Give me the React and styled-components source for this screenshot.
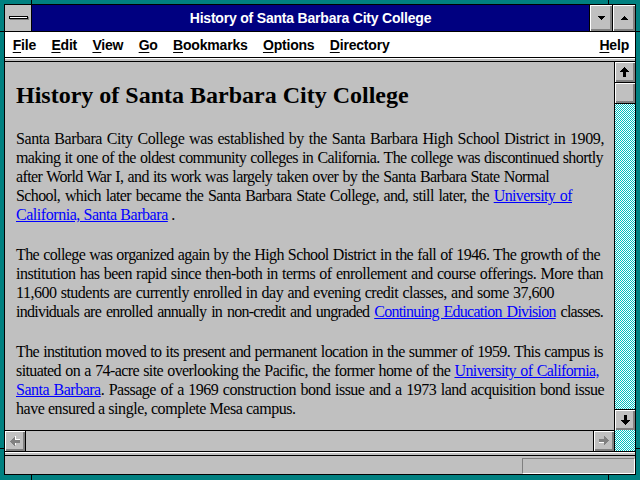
import React from 'react';
import styled, { createGlobalStyle } from 'styled-components';

const GlobalStyle = createGlobalStyle`
  html, body {
    margin: 0;
    padding: 0;
    background: #008080;
  }
  body {
    width: 640px;
    height: 480px;
    overflow: hidden;
  }
`;

const Frame = styled.div`
  position: relative;
  box-sizing: border-box;
  width: 640px;
  height: 480px;
  padding: 4px 4px 5px 4px;
  background: #008080;
`;

// little black notches in the sizing border
const Tick = styled.span`
  position: absolute;
  background: #000;
  ${({ $edge, $at }) => {
    if ($edge === 'top') return `top: 0; left: ${$at}px; width: 1px; height: 4px;`;
    if ($edge === 'bottom') return `bottom: 0; left: ${$at}px; width: 1px; height: 5px;`;
    if ($edge === 'left') return `left: 0; top: ${$at}px; width: 4px; height: 1px;`;
    return `right: 0; top: ${$at}px; width: 4px; height: 1px;`;
  }}
`;

const Window = styled.div`
  box-sizing: border-box;
  height: 100%;
  border: 1px solid #000;
  background: #c0c0c0;
  display: flex;
  flex-direction: column;
`;

const TitleBar = styled.div`
  display: flex;
  height: 26px;
  flex: none;
  background: #000080;
  border-bottom: 1px solid #000;
`;

const ControlBox = styled.div`
  width: 26px;
  border-right: 1px solid #000;
  background: #c0c0c0;
  display: flex;
  align-items: center;
  justify-content: center;
`;

const ControlBar = styled.div`
  width: 17px;
  height: 1px;
  background: #fff;
  border: 1px solid #000;
  box-shadow: 1px 1px 0 #808080;
  margin-top: -1px;
`;

const Title = styled.div`
  flex: 1;
  display: flex;
  align-items: center;
  justify-content: center;
  color: #fff;
  font-family: "Liberation Sans", Arial, sans-serif;
  font-weight: bold;
  font-size: 14px;
  letter-spacing: -0.2px;
  padding-bottom: 1px;
`;

const CaptionButton = styled.div`
  width: 22px;
  border-left: 1px solid #000;
  background: #c0c0c0;
  box-shadow: inset 1px 1px #fff, inset -1px -1px #808080, inset -2px -2px #808080;
  display: flex;
  align-items: center;
  justify-content: center;
`;

const MenuBar = styled.div`
  display: flex;
  align-items: center;
  height: 25px;
  flex: none;
  background: #fff;
  border-bottom: 1px solid #000;
  font-family: "Liberation Sans", Arial, sans-serif;
  font-weight: bold;
  font-size: 14px;
  letter-spacing: -0.2px;
  color: #000;
`;

const MenuItem = styled.span`
  padding: 0 7.7px;
  margin-left: ${({ $right }) => ($right ? 'auto' : '0')};
  padding-right: ${({ $right }) => ($right ? '6px' : '7.7px')};
  u {
    text-decoration: underline;
    text-underline-offset: 2px;
  }
`;

const Divider = styled.div`
  height: 2px;
  flex: none;
  border-top: 1px solid #fff;
  border-bottom: 1px solid #000;
  background: #c0c0c0;
`;

const Main = styled.div`
  flex: 1;
  min-height: 0;
  display: grid;
  grid-template-columns: 1fr 21px;
  grid-template-rows: 1fr 21px;
  border-bottom: 1px solid #000;
`;

const Content = styled.div`
  overflow: hidden;
  padding: 19px 0 0 11px;
  color: #000;
  font-family: "Liberation Serif", "Times New Roman", serif;
`;

const Heading = styled.h1`
  margin: 0 0 20px;
  font-size: 24px;
  line-height: 28px;
  font-weight: bold;
  white-space: nowrap;
`;

const Para = styled.p`
  margin: 0 0 21px;
  font-size: 16px;
  line-height: 19px;
`;

// one rendered line of the page; full lines are spread to the width they have on screen
const Line = styled.span`
  display: block;
  letter-spacing: ${({ $ls }) => ($ls ?? -0.6)}px;
  ${({ $w }) =>
    $w
      ? `width: ${$w}px; text-align: justify; text-align-last: justify;`
      : 'white-space: nowrap;'}
`;

const Link = styled.a`
  color: #0000ff;
  text-decoration: underline;
`;

const dither = `
  background-color: #fff;
  background-image: repeating-conic-gradient(#00c0c0 0% 25%, #fff 0% 50%);
  background-size: 2px 2px;
`;

const VScroll = styled.div`
  display: flex;
  flex-direction: column;
  border-left: 1px solid #000;
  ${dither}
`;

const ScrollButton = styled.div`
  box-sizing: content-box;
  width: 20px;
  height: 20px;
  flex: none;
  background: #c0c0c0;
  box-shadow: inset 1px 1px #fff, inset -1px -1px #808080, inset -2px -2px #808080;
  display: flex;
  align-items: center;
  justify-content: center;
  border-top: ${({ $top }) => ($top ? '1px solid #000' : 'none')};
  border-bottom: ${({ $bottom }) => ($bottom ? '1px solid #000' : 'none')};
  border-left: ${({ $left }) => ($left ? '1px solid #000' : 'none')};
  border-right: ${({ $right }) => ($right ? '1px solid #000' : 'none')};
`;

const Track = styled.div`
  flex: 1;
`;

const HScroll = styled.div`
  display: flex;
  border-top: 1px solid #000;
  background: #c0c0c0;
`;

const Corner = styled.div`
  border-left: 1px solid #000;
  ${dither}
`;

const StatusBar = styled.div`
  height: 18px;
  flex: none;
  display: flex;
  justify-content: flex-end;
  padding: 2px 0 0 0;
  box-sizing: border-box;
`;

const StatusField = styled.div`
  box-sizing: border-box;
  width: 113px;
  height: 16px;
  border-top: 1px solid #808080;
  border-left: 1px solid #808080;
  border-bottom: 1px solid #fff;
  border-right: 1px solid #fff;
`;

const rot = { up: 0, right: 90, down: 180, left: 270 };

const Arrow = ({ dir, disabled }) => (
  <svg width="10" height="10" viewBox="0 0 10 10" shapeRendering="crispEdges">
    <g transform={`rotate(${rot[dir]} 5 5)`}>
      {disabled && (
        <polygon points="5.5,1 10,5.5 7,5.5 7,10 4,10 4,5.5 1,5.5" fill="#fff" />
      )}
      <polygon
        points="4.5,0 9,5 6,5 6,10 3,10 3,5 0,5"
        fill={disabled ? '#808080' : '#000'}
      />
    </g>
  </svg>
);

const Triangle = ({ down }) => (
  <svg width="7" height="4" viewBox="0 0 7 4" shapeRendering="crispEdges">
    <polygon points={down ? '0,0 7,0 3.5,4' : '3.5,0 7,4 0,4'} fill="#000" />
  </svg>
);

const menus = ['File', 'Edit', 'View', 'Go', 'Bookmarks', 'Options', 'Directory'];

export default function App() {
  return (
    <>
      <GlobalStyle />
      <Frame>
        <Tick $edge="top" $at={31} />
        <Tick $edge="top" $at={608} />
        <Tick $edge="bottom" $at={31} />
        <Tick $edge="bottom" $at={608} />
        <Tick $edge="left" $at={31} />
        <Tick $edge="left" $at={448} />
        <Tick $edge="right" $at={31} />
        <Tick $edge="right" $at={448} />
        <Window>
          <TitleBar>
            <ControlBox>
              <ControlBar />
            </ControlBox>
            <Title>History of Santa Barbara City College</Title>
            <CaptionButton>
              <Triangle down />
            </CaptionButton>
            <CaptionButton>
              <Triangle />
            </CaptionButton>
          </TitleBar>
          <MenuBar>
            {menus.map((m) => (
              <MenuItem key={m}>
                <u>{m[0]}</u>
                {m.slice(1)}
              </MenuItem>
            ))}
            <MenuItem $right>
              <u>H</u>elp
            </MenuItem>
          </MenuBar>
          <Divider />
          <Main>
            <Content>
              <Heading>History of Santa Barbara City College</Heading>
              <Para>
                <Line $w={588} $ls={-0.4}>
                  Santa Barbara City College was established by the Santa Barbara High School District in 1909,
                </Line>
                <Line $w={587}>
                  making it one of the oldest community colleges in California. The college was discontinued shortly
                </Line>
                <Line $w={533}>
                  after World War I, and its work was largely taken over by the Santa Barbara State Normal
                </Line>
                <Line $w={556}>
                  School, which later became the Santa Barbara State College, and, still later, the{' '}
                  <Link href="#">University of</Link>
                </Line>
                <Line $ls={-0.45}>
                  <Link href="#">California, Santa Barbara</Link> .
                </Line>
              </Para>
              <Para>
                <Line $w={584}>
                  The college was organized again by the High School District in the fall of 1946. The growth of the
                </Line>
                <Line $w={587} $ls={-0.5}>
                  institution has been rapid since then-both in terms of enrollement and course offerings. More than
                </Line>
                <Line $w={538} $ls={-0.5}>
                  11,600 students are currently enrolled in day and evening credit classes, and some 37,600
                </Line>
                <Line $w={587} $ls={-0.75}>
                  individuals are enrolled annually in non-credit and ungraded{' '}
                  <Link href="#">Continuing Education Division</Link> classes.
                </Line>
              </Para>
              <Para>
                <Line $w={587}>
                  The institution moved to its present and permanent location in the summer of 1959. This campus is
                </Line>
                <Line $w={583}>
                  situated on a 74-acre site overlooking the Pacific, the former home of the{' '}
                  <Link href="#">University of California,</Link>
                </Line>
                <Line $w={588} $ls={-0.5}>
                  <Link href="#">Santa Barbara</Link>. Passage of a 1969 construction bond issue and a 1973 land
                  acquisition bond issue
                </Line>
                <Line $ls={-0.45}>have ensured a single, complete Mesa campus.</Line>
              </Para>
            </Content>
            <VScroll>
              <ScrollButton $bottom>
                <Arrow dir="up" />
              </ScrollButton>
              <ScrollButton $bottom />
              <Track />
              <ScrollButton $top>
                <Arrow dir="down" />
              </ScrollButton>
            </VScroll>
            <HScroll>
              <ScrollButton $right>
                <Arrow dir="left" disabled />
              </ScrollButton>
              <Track />
              <ScrollButton $left>
                <Arrow dir="right" disabled />
              </ScrollButton>
            </HScroll>
            <Corner />
          </Main>
          <Divider />
          <StatusBar>
            <StatusField />
          </StatusBar>
        </Window>
      </Frame>
    </>
  );
}
